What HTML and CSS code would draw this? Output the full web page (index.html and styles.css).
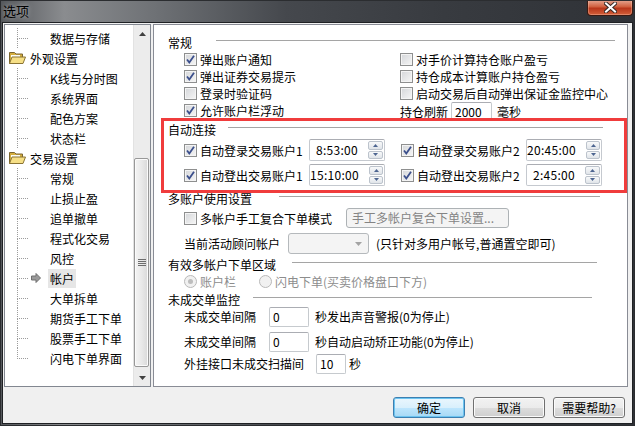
FILE: index.html
```html
<!doctype html>
<html lang="zh">
  <head>
    <meta charset="utf-8">
    <title>选项</title>
    <link rel="stylesheet" href="styles.css">
  </head>
  <body>
    <div class="window">
      <div class="titlebar">
        <span class="title">选项</span>
        <span class="close">
          <svg width="13" height="11" viewBox="0 0 13 11"><path d="M2 1.5 L11 9.5 M11 1.5 L2 9.5" stroke="#3a2a26" stroke-width="4" stroke-linecap="square"/><path d="M2 1.5 L11 9.5 M11 1.5 L2 9.5" stroke="#fff" stroke-width="2" stroke-linecap="square"/></svg>
        </span>
      </div>

      <div class="client">
        <div class="panes">
          <!-- tree of option pages -->
          <div class="tree">
            <ul class="tree_list">
              <li class="node"><span class="twig"><i></i><i></i></span><span class="slot"></span><span class="label">数据与存储</span></li>
              <li class="node folder"><svg class="folder_icon" width="17" height="12" viewBox="0 0 17 12"><path d="M0.5 0.5h5l1.5 1.5h6.5v9.5h-13z" fill="#d4ad3e" stroke="#7a6530"/><path d="M2 3h9v4h-9z" fill="#fbfbf4"/><path d="M0.5 11.5l2.5-6.5h13.5l-2.5 6.5z" fill="#f6df86" stroke="#8a7434"/></svg><span class="label">外观设置</span></li>
              <li class="node"><span class="twig"><i></i><i></i></span><span class="slot"></span><span class="label">K线与分时图</span></li>
              <li class="node"><span class="twig"><i></i><i></i></span><span class="slot"></span><span class="label">系统界面</span></li>
              <li class="node"><span class="twig"><i></i><i></i></span><span class="slot"></span><span class="label">配色方案</span></li>
              <li class="node"><span class="twig"><i></i><i></i></span><span class="slot"></span><span class="label">状态栏</span></li>
              <li class="node folder"><svg class="folder_icon" width="17" height="12" viewBox="0 0 17 12"><path d="M0.5 0.5h5l1.5 1.5h6.5v9.5h-13z" fill="#d4ad3e" stroke="#7a6530"/><path d="M2 3h9v4h-9z" fill="#fbfbf4"/><path d="M0.5 11.5l2.5-6.5h13.5l-2.5 6.5z" fill="#f6df86" stroke="#8a7434"/></svg><span class="label">交易设置</span></li>
              <li class="node"><span class="twig"><i></i><i></i></span><span class="slot"></span><span class="label">常规</span></li>
              <li class="node"><span class="twig"><i></i><i></i></span><span class="slot"></span><span class="label">止损止盈</span></li>
              <li class="node"><span class="twig"><i></i><i></i></span><span class="slot"></span><span class="label">追单撤单</span></li>
              <li class="node"><span class="twig"><i></i><i></i></span><span class="slot"></span><span class="label">程式化交易</span></li>
              <li class="node"><span class="twig"><i></i><i></i></span><span class="slot"></span><span class="label">风控</span></li>
              <li class="node sel"><span class="twig"><i></i><i></i></span><span class="slot"><svg width="10" height="10" viewBox="0 0 10 10"><path d="M0.5 3h4.5v-2.5l4.5 4.5-4.5 4.5v-2.5h-4.5z" fill="#9a9a9a" stroke="#6e6e6e"/></svg></span><span class="label">帐户</span></li>
              <li class="node"><span class="twig"><i></i><i></i></span><span class="slot"></span><span class="label">大单拆单</span></li>
              <li class="node"><span class="twig"><i></i><i></i></span><span class="slot"></span><span class="label">期货手工下单</span></li>
              <li class="node"><span class="twig"><i></i><i></i></span><span class="slot"></span><span class="label">股票手工下单</span></li>
              <li class="node last"><span class="twig"><i></i><i></i></span><span class="slot"></span><span class="label">闪电下单界面</span></li>
            </ul>
            <div class="vscroll">
              <div class="sb_btn"><svg width="7" height="4" viewBox="0 0 7 4"><path d="M0 4L3.5 0L7 4z" fill="#404040"/></svg></div>
              <div class="sb_track">
                <div class="sb_thumb">
                  <svg width="8" height="7" viewBox="0 0 8 7"><path d="M0 0.5h8M0 2.5h8M0 4.5h8M0 6.5h8" stroke="#6d6d6d"/></svg>
                </div>
              </div>
              <div class="sb_btn"><svg width="7" height="4" viewBox="0 0 7 4"><path d="M0 0L3.5 4L7 0z" fill="#404040"/></svg></div>
            </div>
          </div>

          <!-- account page -->
          <div class="page">
            <div class="sec_head"><span>常规</span><span class="rule rule_cg"></span></div>
            <div class="opts indent">
              <label class="chk"><span class="cb on"><svg width="11" height="11" viewBox="0 0 11 11"><path d="M2 5.5L4.3 8.5L9 1.8" fill="none" stroke="#3b4f8c" stroke-width="1.8"/></svg></span>弹出账户通知</label>
              <label class="chk"><span class="cb"></span>对手价计算持仓账户盈亏</label>
              <label class="chk"><span class="cb on"><svg width="11" height="11" viewBox="0 0 11 11"><path d="M2 5.5L4.3 8.5L9 1.8" fill="none" stroke="#3b4f8c" stroke-width="1.8"/></svg></span>弹出证券交易提示</label>
              <label class="chk"><span class="cb"></span>持仓成本计算账户持仓盈亏</label>
              <label class="chk"><span class="cb"></span>登录时验证码</label>
              <label class="chk"><span class="cb"></span>启动交易后自动弹出保证金监控中心</label>
              <label class="chk top"><span class="cb on"><svg width="11" height="11" viewBox="0 0 11 11"><path d="M2 5.5L4.3 8.5L9 1.8" fill="none" stroke="#3b4f8c" stroke-width="1.8"/></svg></span>允许账户栏浮动</label>
              <div class="refresh">持仓刷新<span class="field f_refresh">2000</span>毫秒</div>
            </div>

            <div class="sec_head"><span>自动连接</span><span class="rule rule_lj"></span></div>
            <div class="timers indent">
              <label class="chk"><span class="cb on"><svg width="11" height="11" viewBox="0 0 11 11"><path d="M2 5.5L4.3 8.5L9 1.8" fill="none" stroke="#3b4f8c" stroke-width="1.8"/></svg></span>自动登录交易账户1</label>
              <div class="timebox"><span class="tval">8:53:00</span><span class="spin"><b><svg width="5" height="3" viewBox="0 0 5 3"><path d="M0 3L2.5 0L5 3z" fill="#4d6590"/></svg></b><b><svg width="5" height="3" viewBox="0 0 5 3"><path d="M0 0L2.5 3L5 0z" fill="#4d6590"/></svg></b></span></div>
              <label class="chk"><span class="cb on"><svg width="11" height="11" viewBox="0 0 11 11"><path d="M2 5.5L4.3 8.5L9 1.8" fill="none" stroke="#3b4f8c" stroke-width="1.8"/></svg></span>自动登录交易账户2</label>
              <div class="timebox"><span class="tval">20:45:00</span><span class="spin"><b><svg width="5" height="3" viewBox="0 0 5 3"><path d="M0 3L2.5 0L5 3z" fill="#4d6590"/></svg></b><b><svg width="5" height="3" viewBox="0 0 5 3"><path d="M0 0L2.5 3L5 0z" fill="#4d6590"/></svg></b></span></div>
              <label class="chk"><span class="cb on"><svg width="11" height="11" viewBox="0 0 11 11"><path d="M2 5.5L4.3 8.5L9 1.8" fill="none" stroke="#3b4f8c" stroke-width="1.8"/></svg></span>自动登出交易账户1</label>
              <div class="timebox"><span class="tval">15:10:00</span><span class="spin"><b><svg width="5" height="3" viewBox="0 0 5 3"><path d="M0 3L2.5 0L5 3z" fill="#4d6590"/></svg></b><b><svg width="5" height="3" viewBox="0 0 5 3"><path d="M0 0L2.5 3L5 0z" fill="#4d6590"/></svg></b></span></div>
              <label class="chk"><span class="cb on"><svg width="11" height="11" viewBox="0 0 11 11"><path d="M2 5.5L4.3 8.5L9 1.8" fill="none" stroke="#3b4f8c" stroke-width="1.8"/></svg></span>自动登出交易账户2</label>
              <div class="timebox"><span class="tval">2:45:00</span><span class="spin"><b><svg width="5" height="3" viewBox="0 0 5 3"><path d="M0 3L2.5 0L5 3z" fill="#4d6590"/></svg></b><b><svg width="5" height="3" viewBox="0 0 5 3"><path d="M0 0L2.5 3L5 0z" fill="#4d6590"/></svg></b></span></div>
            </div>

            <div class="sec_head head_dz"><span>多账户使用设置</span><span class="rule rule_dz"></span></div>
            <div class="row indent row_multi">
              <label class="chk"><span class="cb"></span>多帐户手工复合下单模式</label>
              <span class="btn_off">手工多帐户复合下单设置...</span>
            </div>
            <div class="row indent row_combo">
              <span>当前活动顾问帐户</span>
              <span class="combo"><svg width="7" height="4" viewBox="0 0 7 4"><path d="M0 0L3.5 4L7 0z" fill="#a3a3a3"/></svg></span>
              <span>(只针对多用户帐号,普通置空即可)</span>
            </div>

            <div class="sec_head head_yx"><span>有效多帐户下单区域</span><span class="rule rule_yx"></span></div>
            <div class="row indent row_radio">
              <label class="rad off"><span class="rb on"></span>账户栏</label>
              <label class="rad off"><span class="rb"></span>闪电下单(买卖价格盘口下方)</label>
            </div>

            <div class="sec_head head_wc"><span>未成交单监控</span><span class="rule rule_wc"></span></div>
            <div class="row indent row_wc1"><span>未成交单间隔</span><span class="field f_gap">0</span><span>秒发出声音警报(0为停止)</span></div>
            <div class="row indent row_wc2"><span>未成交单间隔</span><span class="field f_gap">0</span><span>秒自动启动矫正功能(0为停止)</span></div>
            <div class="row indent row_wc3"><span>外挂接口未成交扫描间</span><span class="field f_scan">10</span><span>秒</span></div>
          </div>
        </div>

        <div class="buttons">
          <span class="btn default">确定</span>
          <span class="btn">取消</span>
          <span class="btn">需要帮助?</span>
        </div>
      </div>

      <!-- red highlight drawn over the screenshot -->
      <div class="highlight"></div>
    </div>
  </body>
</html>
```

FILE: styles.css
```css
*{
  box-sizing: border-box;
}
body{
  margin: 0;
  font-family: "Noto Sans CJK SC", "Noto Sans", sans-serif;
  font-size: 12px;
  color: #000;
}
.window{
  position: relative;
  width: 635px;
  height: 426px;
  border: 1px solid #2b2d30;
  background: linear-gradient(90deg, #55585c 0%, #8a8c8f 10%, #6f7276 24%, #45484d 45%, #383b40 70%, #2f3237 100%);
  display: flex;
  flex-direction: column;
  overflow: hidden;
}
/*--------------------------*/
.titlebar{
  height: 21px;
  display: flex;
  justify-content: space-between;
  align-items: flex-start;
  padding: 0 1px 0 2px;
}
.title{
  font-size: 13px;
  line-height: 20px;
  text-shadow: 0 0 5px rgba(255,255,255,.6);
}
.close{
  width: 46px;
  height: 16px;
  margin-top: -1px;
  border: 1px solid #3a1a12;
  border-top: none;
  border-radius: 0 0 4px 4px;
  background: linear-gradient(#e6a894, #d0603f 45%, #b8361a 55%, #d3603a);
  box-shadow: inset 0 0 0 1px rgba(255,210,190,.35);
  display: flex;
  align-items: center;
  justify-content: center;
}
/*--------------------------*/
.client{
  flex: 1;
  margin: 0 1px 1px 1px;
  border: 1px solid #1f2124;
  background: #f0f0f0;
  display: flex;
  flex-direction: column;
}
.panes{
  display: flex;
  gap: 2px;
  padding: 1px 0 0 1px;
  height: 365px;
}
.tree{
  width: 147px;
  height: 363px;
  border: 1px solid #828790;
  background: #fff;
  display: flex;
}
.tree_list{
  flex: 1;
  list-style: none;
  margin: 0;
  padding: 3px 0 0 0;
}
.node{
  height: 20px;
  display: flex;
  align-items: center;
  white-space: nowrap;
}
.twig{
  margin-left: 12px;
  width: 11px;
  height: 20px;
  display: flex;
  flex-direction: column;
}
.twig i{
  display: block;
  height: 9px;
  border-left: 1px dotted #9c9c9c;
}
.twig i:first-child{
  height: 11px;
  border-bottom: 1px dotted #9c9c9c;
}
.node.last .twig i:last-child{
  border-left: none;
}
.slot{
  width: 20px;
  height: 20px;
  display: flex;
  align-items: center;
  padding-left: 3px;
}
.label{
  padding: 0 2px;
  line-height: 19px;
}
.node.sel .label{
  background: #e6e6e6;
}
.folder_icon{
  margin-left: 4px;
  margin-right: 2px;
}
/*--------------------------*/
.vscroll{
  width: 17px;
  display: flex;
  flex-direction: column;
  background: #ececec;
  border-left: 1px solid #e2e2e2;
}
.sb_btn{
  height: 17px;
  display: flex;
  align-items: center;
  justify-content: center;
}
.sb_track{
  flex: 1;
  padding: 116px 1px 2px 0;
  display: flex;
}
.sb_thumb{
  flex: 1;
  border: 1px solid #989898;
  border-radius: 2px;
  background: linear-gradient(90deg, #f4f4f4, #e9e9e9 50%, #d9d9d9);
  box-shadow: inset 0 0 0 1px #fbfbfb;
  display: flex;
  align-items: center;
  justify-content: center;
}
/*--------------------------*/
.page{
  width: 475px;
  height: 363px;
  border: 1px solid #898c95;
  background: #fff;
  padding: 9px 0 0 14px;
}
.indent{
  padding-left: 16px;
}
.sec_head{
  display: flex;
  align-items: center;
  height: 17px;
}
.rule{
  flex: 1;
  height: 1px;
  background: #a5a5a5;
  margin-bottom: 4px;
}
.rule_cg{ margin-left: 24px; margin-right: 12px; }
.rule_lj{ margin-left: 12px; margin-right: 24px; }
.rule_dz{ margin-left: 27px; margin-right: 27px; }
.rule_yx{ margin-left: 16px; margin-right: 30px; }
.rule_wc{ margin-left: 13px; margin-right: 35px; }
.head_dz{ margin-top: 4px; }
.head_yx{ margin-top: 2px; }
.head_wc{ margin-top: 2px; height: 14px; }

.chk, .rad{
  display: flex;
  align-items: center;
  gap: 3px;
  height: 17px;
  white-space: nowrap;
}
.chk.top{
  align-self: start;
}
.cb{
  width: 13px;
  height: 13px;
  border: 1px solid #8e8f8f;
  background: linear-gradient(135deg, #d4d6d9, #f6f6f6);
  box-shadow: inset 0 0 0 1px #f4f4f4;
  display: flex;
  align-items: center;
  justify-content: center;
}
.rb{
  width: 13px;
  height: 13px;
  border: 1px solid #b9b9b9;
  border-radius: 50%;
  background: #f1f1f1;
  display: flex;
  align-items: center;
  justify-content: center;
}
.rb.on::after{
  content: "";
  width: 5px;
  height: 5px;
  border-radius: 50%;
  background: #bdbdbd;
}
.rad.off{
  color: #8d8d8d;
}

.opts{
  display: grid;
  grid-template-columns: 216px auto;
  grid-template-rows: 17px 17px 17px 19px;
}
.refresh{
  display: flex;
  align-items: center;
  gap: 3px;
}
.field{
  height: 19px;
  border: 1px solid #c6cace;
  border-top-color: #abadb3;
  border-radius: 2px;
  background: #fff;
  padding-left: 3px;
  line-height: 17px;
}
.f_refresh{ width: 41px; margin-right: 2px; }
.f_gap{ width: 40px; height: 20px; margin: 0 6px 0 13px; }
.f_scan{ width: 30px; height: 20px; margin: 0 3px 0 12px; }

.timers{
  margin-top: 1px;
  display: grid;
  grid-template-columns: 125px 92px 125px 77px;
  grid-template-rows: 22px 22px;
  row-gap: 3px;
  align-items: center;
}
.timebox{
  width: 76px;
  height: 22px;
  border: 1px solid #c5c9cf;
  border-top-color: #abadb3;
  border-radius: 2px;
  display: flex;
}
.tval{
  flex: 1;
  text-align: right;
  padding-right: 9px;
  line-height: 20px;
  letter-spacing: 0.3px;
}
.spin{
  width: 15px;
  margin: 1px;
  display: flex;
  flex-direction: column;
  gap: 1px;
}
.spin b{
  flex: 1;
  border: 1px solid #bcc3cc;
  border-radius: 2px;
  background: linear-gradient(#f8f9fa, #e0e4e9);
  display: flex;
  align-items: center;
  justify-content: center;
}

.row{
  display: flex;
  align-items: center;
  white-space: nowrap;
}
.row_multi{ margin-top: 1px; height: 20px; gap: 14px; }
.btn_off{
  width: 163px;
  height: 20px;
  border: 1px solid #adb2b5;
  border-radius: 3px;
  background: #f4f4f4;
  color: #848484;
  padding-left: 5px;
  line-height: 18px;
}
.row_combo{ margin-top: 5px; height: 21px; }
.combo{
  width: 81px;
  height: 21px;
  margin: 0 7px 0 8px;
  border: 1px solid #b5b9bc;
  border-radius: 3px;
  background: #f4f4f4;
  display: flex;
  align-items: center;
  justify-content: flex-end;
  padding-right: 6px;
}
.row_radio{ height: 17px; gap: 23px; }
.row_wc1{ height: 21px; }
.row_wc2{ height: 21px; margin-top: 4px; }
.row_wc3{ height: 21px; margin-top: 1px; }
/*--------------------------*/
.buttons{
  display: flex;
  justify-content: flex-end;
  gap: 8px;
  padding: 9px 7px 0 0;
}
.btn{
  width: 72px;
  height: 21px;
  border: 1px solid #707070;
  border-radius: 3px;
  background: linear-gradient(#f2f2f2 0%, #ebebeb 50%, #dddddd 51%, #cfcfcf 100%);
  box-shadow: inset 0 0 0 1px #fbfbfb;
  display: flex;
  align-items: center;
  justify-content: center;
}
.btn.default{
  border-color: #3c7fb1;
  background: linear-gradient(#eaf6fd 0%, #d9f0fc 50%, #bee6fd 51%, #a7d9f5 100%);
  box-shadow: inset 0 0 0 1px #6cc4f0;
}
/*--------------------------*/
.highlight{
  position: absolute;
  left: 160px;
  top: 117px;
  width: 466px;
  height: 75px;
  border: 3px solid #f03c3c;
}
```
